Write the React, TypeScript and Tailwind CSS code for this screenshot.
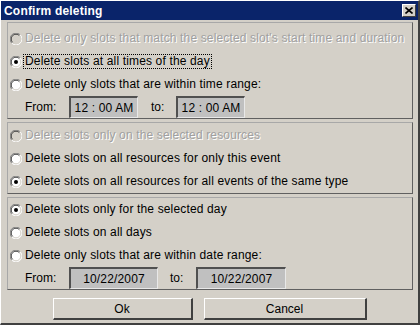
import React from 'react';

const FONT = "font-['Liberation_Sans',Arial,sans-serif]";

function Radio({ checked, disabled }: { checked?: boolean; disabled?: boolean }) {
  return (
    <svg width="12" height="12" viewBox="0 0 12 12" className="shrink-0">
      <circle cx="6" cy="6" r="5.5" fill={disabled ? '#d4d0c8' : '#ffffff'} />
      <path d="M1.8 10.2 A5.5 5.5 0 0 1 10.2 1.8" stroke="#808080" strokeWidth="1" fill="none" />
      <path d="M2.6 9.4 A4.4 4.4 0 0 1 9.4 2.6" stroke="#404040" strokeWidth="1" fill="none" />
      <path d="M10.2 1.8 A5.5 5.5 0 0 1 1.8 10.2" stroke="#ffffff" strokeWidth="1" fill="none" />
      <path d="M9.4 2.6 A4.4 4.4 0 0 1 2.6 9.4" stroke="#d4d0c8" strokeWidth="1" fill="none" />
      {checked && <circle cx="6" cy="6" r="2" fill="#000" />}
    </svg>
  );
}

function Option({ label, checked, disabled, focused }: { label: string; checked?: boolean; disabled?: boolean; focused?: boolean }) {
  return (
    <div className="h-[23px] flex items-center pl-[2px] gap-[3px]">
      <Radio checked={checked} disabled={disabled} />
      <span
        className={
          'tracking-[0.15px] ' +
          (disabled ? 'text-[#a0a0a0] [text-shadow:1px_1px_0_#ffffff] ' : 'text-black ') +
          (focused ? 'border border-dotted border-black px-[1px] leading-[13px] -ml-[2px]' : 'leading-[15px]')
        }
      >
        {label}
      </span>
    </div>
  );
}

function Field({ value, w }: { value: string; w: string }) {
  return (
    <div
      className={
        w +
        ' h-[22px] bg-[#c0c0c0] border-t-2 border-l-2 border-t-[#505050] border-l-[#505050] border-r border-b border-r-[#e8e8e8] border-b-[#e8e8e8] flex items-center justify-center text-black tracking-[0.15px]'
      }
    >
      {value}
    </div>
  );
}

function Panel({ children, pt }: { children: React.ReactNode; pt: string }) {
  return (
    <div className={'border border-t-[#a8a8a8] border-l-[#a8a8a8] border-r-[#606060] border-b-[#606060] flex flex-col ' + pt}>
      {children}
    </div>
  );
}

function Button({ label, w }: { label: string; w: string }) {
  return (
    <div className={w + ' h-[22px] border-t border-l border-white border-r-2 border-b-2 border-r-[#404040] border-b-[#404040] flex items-center justify-center text-black'}>
      {label}
    </div>
  );
}

export default function App() {
  return (
    <div className={'w-[420px] h-[325px] bg-[#d4d0c8] border-t border-l border-white border-r-2 border-b-2 border-r-[#404040] border-b-[#404040] flex flex-col text-[12px] ' + FONT}>
      <div className="h-[19px] bg-[#0a246a] flex items-center justify-between pl-[3px] pr-[2px]">
        <span className="text-white font-bold text-[12px] tracking-[0.2px]">Confirm deleting</span>
        <div className="w-[14px] h-[13px] bg-[#d4d0c8] border-t border-l border-white border-r border-b border-r-[#404040] border-b-[#404040] flex items-center justify-center">
          <svg width="8" height="7" viewBox="0 0 8 7">
            <path d="M0.5 0.5 L7.5 6.5 M7.5 0.5 L0.5 6.5" stroke="#000" strokeWidth="1.6" />
          </svg>
        </div>
      </div>

      <div className="flex flex-col px-[6px] pr-[5px] mt-[2px] gap-[3px]">
        <Panel pt="pt-[4px]">
          <Option label="Delete only slots that match the selected slot's start time and duration" disabled />
          <Option label="Delete slots at all times of the day" checked focused />
          <Option label="Delete only slots that are within time range:" />
          <div className="flex items-center h-[22px]">
            <span className="w-[61px] pl-[17px]">From:</span>
            <Field value="12 : 00 AM" w="w-[69px]" />
            <span className="w-[38px] pl-[13px]">to:</span>
            <Field value="12 : 00 AM" w="w-[69px]" />
          </div>
        </Panel>

        <Panel pt="pt-[1px]">
          <Option label="Delete slots only on the selected resources" disabled />
          <Option label="Delete slots on all resources for only this event" />
          <Option label="Delete slots on all resources for all events of the same type" checked />
        </Panel>

        <Panel pt="pt-0">
          <Option label="Delete slots only for the selected day" checked />
          <Option label="Delete slots on all days" />
          <Option label="Delete only slots that are within date range:" />
          <div className="flex items-center h-[22px]">
            <span className="w-[61px] pl-[17px]">From:</span>
            <Field value="10/22/2007" w="w-[89px]" />
            <span className="w-[38px] pl-[12px]">to:</span>
            <Field value="10/22/2007" w="w-[90px]" />
          </div>
        </Panel>
      </div>

      <div className="flex justify-center gap-[11px] mt-[8px]">
        <Button label="Ok" w="w-[140px]" />
        <Button label="Cancel" w="w-[163px]" />
      </div>
    </div>
  );
}
